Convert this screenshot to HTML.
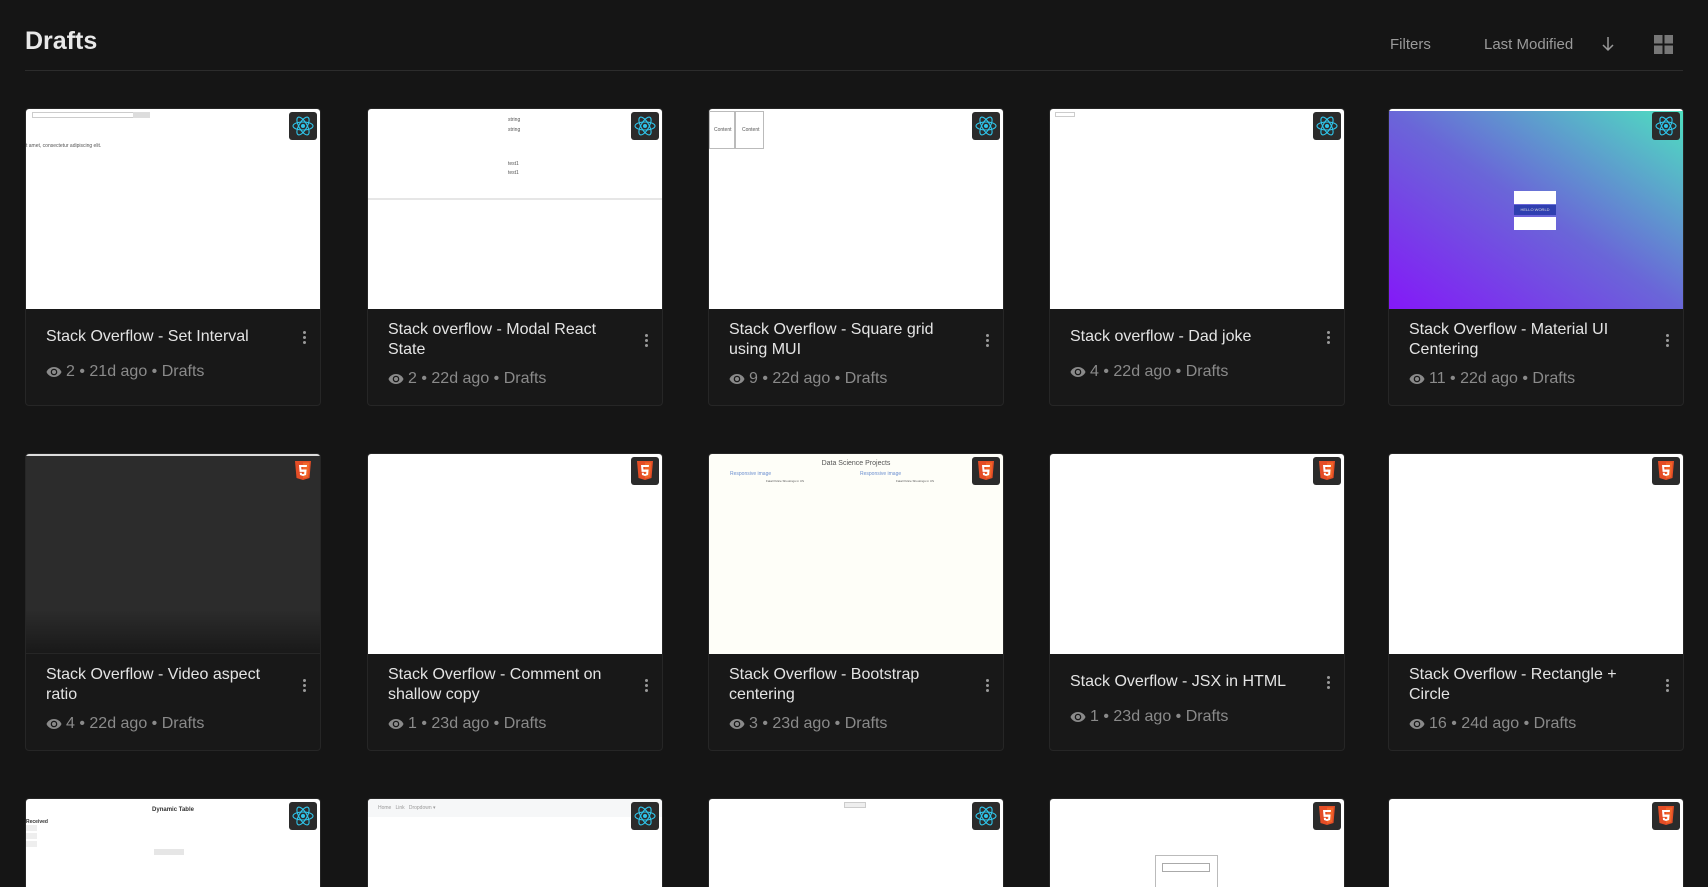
<!DOCTYPE html><html><head><meta charset="utf-8"><style>
*{margin:0;padding:0;box-sizing:border-box}
html{width:1708px;height:887px;overflow:hidden}
body{width:1708px;height:887px;background:#151515;font-family:"Liberation Sans",sans-serif;overflow:hidden;position:relative}
h1{position:absolute;left:25px;top:27px;font-size:25px;font-weight:bold;color:#e8e8e8}
.hr{position:absolute;left:25px;top:70px;width:1658px;height:1px;background:#2c2c2c}
.tb{position:absolute;top:36px;font-size:15px;color:#9a9a9a}
.card{position:absolute;width:296px;height:298px;background:#181818;border:1px solid #262626;border-radius:4px;overflow:hidden}
.row3{height:89px;border-bottom:none;border-radius:4px 4px 0 0}
.th{position:absolute;left:0;top:0;width:100%;height:200px;background:#fff;overflow:hidden}
.badge{position:absolute;right:3px;top:3px;width:28px;height:28px;background:#2b2b2b;border-radius:3px;display:flex;align-items:center;justify-content:center}
.body{position:absolute;left:20px;top:200px;right:14px;height:90px;display:flex;flex-direction:column;justify-content:center}
.tr{position:relative;padding-right:20px}
.t{font-size:16px;line-height:20px;color:#e4e4e4}
.m{font-size:16px;color:#8a8a8a;margin-top:16px;display:flex;align-items:center;gap:4px;line-height:18px}
.two .m{margin-top:10px}
.dots{position:absolute;right:0;top:0;bottom:0;display:flex;flex-direction:column;justify-content:center;gap:2px;align-items:center}
.dots i{width:3px;height:3px;background:#999;border-radius:50%;display:block}
.tiny{position:absolute;font-size:5px;color:#555}
</style></head><body>
<h1>Drafts</h1>
<div class="hr"></div>
<div class="tb" style="left:1390px">Filters</div>
<div class="tb" style="left:1484px">Last Modified</div>
<svg style="position:absolute;left:1601px;top:35px" width="14" height="18" viewBox="0 0 14 18"><path d="M7 2v13M2 10l5 5 5-5" stroke="#999" stroke-width="1.5" fill="none"/></svg>
<svg style="position:absolute;left:1654px;top:35px" width="19" height="19"><rect x="0" y="0" width="8.5" height="8.5" fill="#777"/><rect x="10.5" y="0" width="8.5" height="8.5" fill="#777"/><rect x="0" y="10.5" width="8.5" height="8.5" fill="#777"/><rect x="10.5" y="10.5" width="8.5" height="8.5" fill="#777"/></svg>

<svg width="0" height="0" style="position:absolute"><defs>
<g id="react"><g fill="none" stroke="#2fc6ec" stroke-width="1.1"><ellipse cx="11" cy="11" rx="10" ry="4"/><ellipse cx="11" cy="11" rx="10" ry="4" transform="rotate(60 11 11)"/><ellipse cx="11" cy="11" rx="10" ry="4" transform="rotate(120 11 11)"/></g><circle cx="11" cy="11" r="2" fill="#2fc6ec"/></g>
<g id="h5"><path d="M1 0h16l-1.5 17L9 19l-6.5-2z" fill="#e44d26"/><path d="M9 1.5v16l5-1.5 1.3-14.5z" fill="#f16529"/><path d="M5 4h8l-.2 2H7.2l.2 2.5h5.2l-.5 5.5L9 15l-3-1-.2-2.3h2l.1 1.1 1.1.3 1.2-.3.1-1.9H5.6z" fill="#fff"/></g>
<path id="eye" d="M8 1C4.5 1 1.6 3.2.5 6c1.1 2.8 4 5 7.5 5s6.4-2.2 7.5-5C14.4 3.2 11.5 1 8 1zm0 8.3A3.3 3.3 0 1 1 8 2.7a3.3 3.3 0 0 1 0 6.6zM8 4a2 2 0 1 0 0 4 2 2 0 0 0 0-4z" fill="#8a8a8a"/>
</defs></svg>

<!-- Row 1 -->
<div class="card" style="left:25px;top:108px"><div class="th"><div style="position:absolute;left:6px;top:3px;width:110px;height:6px;border:1px solid #ccc"></div><div style="position:absolute;left:107px;top:3px;width:17px;height:6px;background:#ddd"></div><div class="tiny" style="left:0;top:34px">t amet, consectetur adipiscing elit.</div></div><div class="badge"><svg width="22" height="22"><use href="#react"/></svg></div><div class="body"><div class="tr"><div class="t">Stack Overflow - Set Interval</div><div class="dots"><i></i><i></i><i></i></div></div><div class="m"><svg width="16" height="12" viewBox="0 0 16 12"><use href="#eye"/></svg>2 • 21d ago • Drafts</div></div></div>

<div class="card" style="left:367px;top:108px"><div class="th"><div class="tiny" style="left:140px;top:8px">string</div><div class="tiny" style="left:140px;top:18px">string</div><div class="tiny" style="left:140px;top:52px">test1</div><div class="tiny" style="left:140px;top:61px">test1</div><div style="position:absolute;left:0;top:89px;width:100%;height:2px;background:#e6e6e6"></div></div><div class="badge"><svg width="22" height="22"><use href="#react"/></svg></div><div class="body two"><div class="tr"><div class="t">Stack overflow - Modal React State</div><div class="dots"><i></i><i></i><i></i></div></div><div class="m"><svg width="16" height="12" viewBox="0 0 16 12"><use href="#eye"/></svg>2 • 22d ago • Drafts</div></div></div>

<div class="card" style="left:708px;top:108px"><div class="th"><div style="position:absolute;left:0;top:2px;width:26px;height:38px;border:1px solid #bbb"></div><div style="position:absolute;left:26px;top:2px;width:29px;height:38px;border:1px solid #bbb"></div><div class="tiny" style="left:5px;top:18px">Content</div><div class="tiny" style="left:33px;top:18px">Content</div></div><div class="badge"><svg width="22" height="22"><use href="#react"/></svg></div><div class="body two"><div class="tr"><div class="t">Stack Overflow - Square grid using MUI</div><div class="dots"><i></i><i></i><i></i></div></div><div class="m"><svg width="16" height="12" viewBox="0 0 16 12"><use href="#eye"/></svg>9 • 22d ago • Drafts</div></div></div>

<div class="card" style="left:1049px;top:108px"><div class="th"><div style="position:absolute;left:5px;top:3px;width:20px;height:5px;border:1px solid #ccc"></div></div><div class="badge"><svg width="22" height="22"><use href="#react"/></svg></div><div class="body"><div class="tr"><div class="t">Stack overflow - Dad joke</div><div class="dots"><i></i><i></i><i></i></div></div><div class="m"><svg width="16" height="12" viewBox="0 0 16 12"><use href="#eye"/></svg>4 • 22d ago • Drafts</div></div></div>

<div class="card" style="left:1388px;top:108px"><div class="th" style="background:linear-gradient(to top right,#8418f8 0%,#6a66d8 50%,#4ee0c0 100%);border-top:2px solid #fff"><div style="position:absolute;left:125px;top:80px;width:42px;height:13px;background:#fff"></div><div style="position:absolute;left:125px;top:94px;width:42px;height:10px;background:#2f3fb0;color:#ddd;font-size:4px;text-align:center;line-height:10px">HELLO WORLD</div><div style="position:absolute;left:125px;top:106px;width:42px;height:13px;background:#fff"></div></div><div class="badge"><svg width="22" height="22"><use href="#react"/></svg></div><div class="body two"><div class="tr"><div class="t">Stack Overflow - Material UI Centering</div><div class="dots"><i></i><i></i><i></i></div></div><div class="m"><svg width="16" height="12" viewBox="0 0 16 12"><use href="#eye"/></svg>11 • 22d ago • Drafts</div></div></div>

<!-- Row 2 -->
<div class="card" style="left:25px;top:453px"><div class="th" style="background:linear-gradient(#2c2c2c 0%,#2c2c2c 78%,#191919 100%);border-top:2px solid #ddd;border-bottom:1px solid #262626"></div><div class="badge" style="background:transparent"><svg width="18" height="20"><use href="#h5"/></svg></div><div class="body two"><div class="tr"><div class="t">Stack Overflow - Video aspect ratio</div><div class="dots"><i></i><i></i><i></i></div></div><div class="m"><svg width="16" height="12" viewBox="0 0 16 12"><use href="#eye"/></svg>4 • 22d ago • Drafts</div></div></div>

<div class="card" style="left:367px;top:453px"><div class="th"></div><div class="badge"><svg width="18" height="20"><use href="#h5"/></svg></div><div class="body two"><div class="tr"><div class="t">Stack Overflow - Comment on shallow copy</div><div class="dots"><i></i><i></i><i></i></div></div><div class="m"><svg width="16" height="12" viewBox="0 0 16 12"><use href="#eye"/></svg>1 • 23d ago • Drafts</div></div></div>

<div class="card" style="left:708px;top:453px"><div class="th" style="background:#fefef8"><div style="position:absolute;left:0;width:100%;top:6px;text-align:center;font-size:7px;color:#555">Data Science Projects</div><div class="tiny" style="left:21px;top:17px;color:#6b8fd0">Responsive image</div><div class="tiny" style="left:151px;top:17px;color:#6b8fd0">Responsive image</div><div class="tiny" style="left:57px;top:25px;font-size:3px">Fatal Police Shootings in US</div><div class="tiny" style="left:187px;top:25px;font-size:3px">Fatal Police Shootings in US</div></div><div class="badge"><svg width="18" height="20"><use href="#h5"/></svg></div><div class="body two"><div class="tr"><div class="t">Stack Overflow - Bootstrap centering</div><div class="dots"><i></i><i></i><i></i></div></div><div class="m"><svg width="16" height="12" viewBox="0 0 16 12"><use href="#eye"/></svg>3 • 23d ago • Drafts</div></div></div>

<div class="card" style="left:1049px;top:453px"><div class="th"></div><div class="badge"><svg width="18" height="20"><use href="#h5"/></svg></div><div class="body"><div class="tr"><div class="t">Stack Overflow - JSX in HTML</div><div class="dots"><i></i><i></i><i></i></div></div><div class="m"><svg width="16" height="12" viewBox="0 0 16 12"><use href="#eye"/></svg>1 • 23d ago • Drafts</div></div></div>

<div class="card" style="left:1388px;top:453px"><div class="th"></div><div class="badge"><svg width="18" height="20"><use href="#h5"/></svg></div><div class="body two"><div class="tr"><div class="t">Stack Overflow - Rectangle + Circle</div><div class="dots"><i></i><i></i><i></i></div></div><div class="m"><svg width="16" height="12" viewBox="0 0 16 12"><use href="#eye"/></svg>16 • 24d ago • Drafts</div></div></div>

<!-- Row 3 -->
<div class="card row3" style="left:25px;top:798px"><div class="th"><div style="position:absolute;left:0;width:100%;top:8px;text-align:center;font-size:6px;font-weight:bold;color:#333">Dynamic Table</div><div class="tiny" style="left:0;top:20px;font-weight:bold;color:#333">Received</div><div style="position:absolute;left:0;top:26px;width:11px;height:6px;background:#eee"></div><div style="position:absolute;left:0;top:34px;width:11px;height:6px;background:#eee"></div><div style="position:absolute;left:0;top:42px;width:11px;height:6px;background:#eee"></div><div style="position:absolute;left:128px;top:50px;width:30px;height:6px;background:#e6e6e6"></div></div><div class="badge"><svg width="22" height="22"><use href="#react"/></svg></div></div>

<div class="card row3" style="left:367px;top:798px"><div class="th"><div style="position:absolute;left:0;top:0;width:100%;height:18px;background:#f6f7f8"></div><div class="tiny" style="left:10px;top:6px;color:#999">Home &nbsp; Link &nbsp; Dropdown ▾</div></div><div class="badge"><svg width="22" height="22"><use href="#react"/></svg></div></div>

<div class="card row3" style="left:708px;top:798px"><div class="th"><div style="position:absolute;left:135px;top:3px;width:22px;height:6px;background:#eee;border:1px solid #ccc"></div></div><div class="badge"><svg width="22" height="22"><use href="#react"/></svg></div></div>

<div class="card row3" style="left:1049px;top:798px"><div class="th"><div style="position:absolute;left:105px;top:56px;width:63px;height:40px;border:1px solid #bbb"></div><div style="position:absolute;left:112px;top:64px;width:48px;height:9px;border:1px solid #aaa"></div></div><div class="badge"><svg width="18" height="20"><use href="#h5"/></svg></div></div>

<div class="card row3" style="left:1388px;top:798px"><div class="th"></div><div class="badge"><svg width="18" height="20"><use href="#h5"/></svg></div></div>
</body></html>
